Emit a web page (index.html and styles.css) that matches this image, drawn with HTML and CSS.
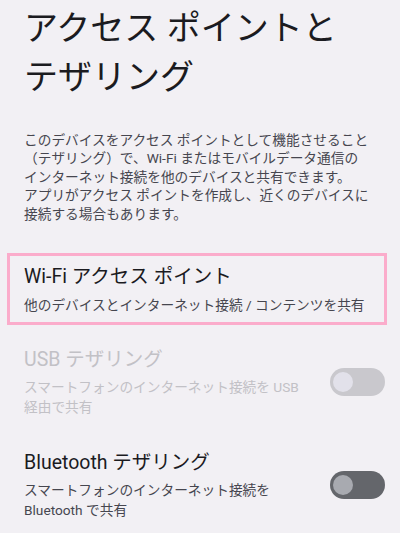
FILE: index.html
```html
<!DOCTYPE html>
<html lang="ja">
<head>
<meta charset="utf-8">
<link rel="stylesheet" href="styles.css">
</head>
<body>
<main class="page">
  <h1 class="title">アクセス ポイントと<br>テザリング</h1>
  <p class="desc">このデバイスをアクセス ポイントとして機能させること<br>（テザリング）で、Wi-Fi またはモバイルデータ通信の<br>インターネット接続を他のデバイスと共有できます。<br>アプリがアクセス ポイントを作成し、近くのデバイスに<br>接続する場合もあります。</p>
  <section class="list">
    <div class="item highlight">
      <div class="text">
        <div class="item-title">Wi-Fi アクセス ポイント</div>
        <div class="item-sub">他のデバイスとインターネット接続 / コンテンツを共有</div>
      </div>
    </div>
    <div class="item row disabled">
      <div class="text">
        <div class="item-title">USB テザリング</div>
        <div class="item-sub">スマートフォンのインターネット接続を USB<br>経由で共有</div>
      </div>
      <div class="switch"><span class="thumb"></span></div>
    </div>
    <div class="item row bt">
      <div class="text">
        <div class="item-title">Bluetooth テザリング</div>
        <div class="item-sub">スマートフォンのインターネット接続を<br>Bluetooth で共有</div>
      </div>
      <div class="switch"><span class="thumb"></span></div>
    </div>
  </section>
</main>
</body>
</html>
```
FILE: styles.css
```css
html, body {
  margin: 0;
  padding: 0;
  background: #f2f0f4;
}
body {
  width: 400px;
  height: 533px;
  overflow: hidden;
  font-family: "Roboto", "Noto Sans CJK JP", sans-serif;
  color: #1b1b1f;
}
.page {
  display: flex;
  flex-direction: column;
}
.title {
  margin: 0;
  padding: 4px 24px 0 24px;
  font-size: 34px;
  line-height: 49px;
  font-weight: 400;
  color: #1b1b1f;
}
.desc {
  margin: 29px 0 0 0;
  padding: 0 24px;
  font-size: 13.7px;
  line-height: 18.4px;
  color: #46464f;
}
.list {
  display: flex;
  flex-direction: column;
  margin-top: 30px;
}
.item {
  display: flex;
  align-items: center;
}
.highlight {
  margin: 0 13px 0 7px;
  border: 3px solid #fbaccb;
  padding: 7px 14px 7px 14px;
}
.item-title {
  font-size: 19.5px;
  line-height: 28px;
  color: #1b1b1f;
}
.item-sub {
  font-size: 13.7px;
  line-height: 20px;
  color: #46464f;
  margin-top: 4px;
}
.row {
  padding: 0 15px 0 24px;
  justify-content: space-between;
}
.disabled {
  margin-top: 21px;
}
.disabled .item-title,
.disabled .item-sub {
  color: #c2c1c6;
}
.row .item-sub {
  margin-top: 3px;
}
.bt {
  margin-top: 32px;
}
.switch {
  width: 55px;
  height: 28px;
  border-radius: 14px;
  background: #c9c8cd;
  display: flex;
  align-items: center;
  padding-left: 3px;
  box-sizing: border-box;
  flex-shrink: 0;
}
.thumb {
  width: 20px;
  height: 20px;
  border-radius: 50%;
  background: #e2e1ea;
}
.bt .switch {
  background: #64666b;
}
.bt .thumb {
  background: #a8aab0;
}
```
